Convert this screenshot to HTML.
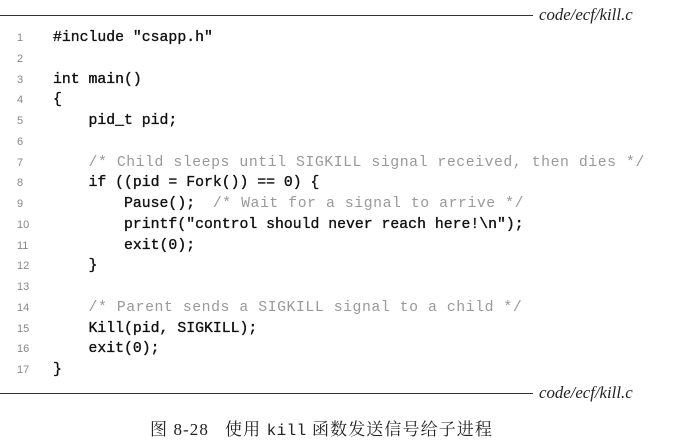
<!DOCTYPE html>
<html><head><meta charset="utf-8"><style>
body{margin:0;width:682px;height:442px;background:#fff;position:relative;overflow:hidden}
.rule{position:absolute;left:0;width:533px;height:1px;background:#333}
.lbl{position:absolute;left:539px;font:italic 16.8px "Liberation Serif",serif;color:#222;line-height:16px}
.ln{position:absolute;left:17px;width:12px;font:11px "Liberation Sans",sans-serif;color:#888;line-height:20.75px}
.code{position:absolute;left:53px;top:28px;font:14.8px/20.75px "Liberation Mono",monospace;color:#111;white-space:pre;margin:0;-webkit-text-stroke:0.35px #111}
.c{color:#999;-webkit-text-stroke:0;letter-spacing:0.55px}
.cap{position:absolute;left:150px;top:415px;font:17px "Liberation Serif","Noto Serif CJK SC",serif;color:#222;white-space:pre;letter-spacing:1.1px}
.cap span{font-family:"Liberation Mono",monospace;font-size:16px;letter-spacing:0.4px}
</style></head><body>
<div class="rule" style="top:15px"></div>
<div class="lbl" style="top:7px">code/ecf/kill.c</div>
<div class="ln" style="top:28px">1<br>2<br>3<br>4<br>5<br>6<br>7<br>8<br>9<br>10<br>11<br>12<br>13<br>14<br>15<br>16<br>17</div>
<pre class="code">#include "csapp.h"

int main()
{
    pid_t pid;

    <span class="c">/* Child sleeps until SIGKILL signal received, then dies */</span>
    if ((pid = Fork()) == 0) {
        Pause();  <span class="c">/* Wait for a signal to arrive */</span>
        printf("control should never reach here!\n");
        exit(0);
    }

    <span class="c">/* Parent sends a SIGKILL signal to a child */</span>
    Kill(pid, SIGKILL);
    exit(0);
}</pre>
<div class="rule" style="top:393px"></div>
<div class="lbl" style="top:385px">code/ecf/kill.c</div>
<div class="cap">图 8-28   使用 <span>kill</span> 函数发送信号给子进程</div>
</body></html>
